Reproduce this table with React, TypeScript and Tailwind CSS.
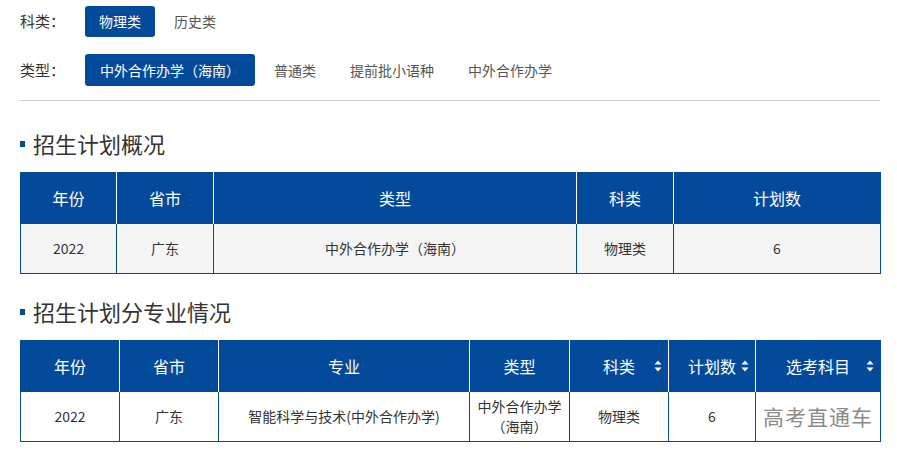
import React from "react";

const BLUE = "bg-[#034b9a]";

function SortIcon() {
  return (
    <svg width="8" height="12" viewBox="0 0 8 12" className="absolute right-[6px] top-1/2 -translate-y-1/2">
      <path d="M4 0.5 L7.5 4.5 L0.5 4.5 Z" fill="#fff" />
      <path d="M4 11.5 L7.5 7.5 L0.5 7.5 Z" fill="#fff" />
    </svg>
  );
}

function Title({ text }: { text: string }) {
  return (
    <div className="flex items-center h-[30px]">
      <span className={`w-[5px] h-[6px] ${BLUE} mr-[8px] mt-[2px]`} />
      <span className="text-[22px] text-[#333] leading-[30px]">{text}</span>
    </div>
  );
}

export default function App() {
  const font = { fontFamily: '"Noto Sans CJK SC", "Noto Sans", sans-serif' };
  return (
    <div className="w-[897px] h-[451px] bg-white overflow-hidden px-[20px] pt-[6px]" style={font}>
      {/* filters */}
      <div className="flex items-center h-[31px]">
        <div className="w-[65px] text-[15px] text-[#333]">科类：</div>
        <div className={`h-[31px] px-[14px] flex items-center rounded-[3px] ${BLUE} text-white text-[14px]`}>物理类</div>
        <div className="ml-[4px] px-[15px] text-[14px] text-[#555]">历史类</div>
      </div>
      <div className="flex items-center h-[32px] mt-[17px]">
        <div className="w-[65px] text-[15px] text-[#333]">类型：</div>
        <div className={`h-[32px] px-[15px] flex items-center rounded-[3px] ${BLUE} text-white text-[14px]`}>中外合作办学（海南）</div>
        <div className="ml-[4px] px-[15px] text-[14px] text-[#555]">普通类</div>
        <div className="ml-[4px] px-[15px] text-[14px] text-[#555]">提前批小语种</div>
        <div className="ml-[4px] px-[15px] text-[14px] text-[#555]">中外合作办学</div>
      </div>
      <div className="mt-[14px] h-px w-[860px] bg-[#cfcfcf]" />

      <div className="mt-[27px]">
        <Title text="招生计划概况" />
      </div>
      <table className="mt-[14px] w-[860px] table-fixed border-collapse border border-[#034b9a]">
        <colgroup>
          <col className="w-[96px]" />
          <col className="w-[97px]" />
          <col className="w-[363px]" />
          <col className="w-[97px]" />
          <col className="w-[207px]" />
        </colgroup>
        <thead>
          <tr className={`${BLUE} h-[51px] text-white text-[16px]`}>
            <th className="font-normal border-r border-white">年份</th>
            <th className="font-normal border-r border-white">省市</th>
            <th className="font-normal border-r border-white">类型</th>
            <th className="font-normal border-r border-white">科类</th>
            <th className="font-normal">计划数</th>
          </tr>
        </thead>
        <tbody>
          <tr className="bg-[#f5f5f5] h-[50px] text-[14px] text-[#333] text-center">
            <td className="border-r border-[#034b9a]">2022</td>
            <td className="border-r border-[#034b9a]">广东</td>
            <td className="border-r border-[#034b9a]">中外合作办学（海南）</td>
            <td className="border-r border-[#034b9a]">物理类</td>
            <td>6</td>
          </tr>
        </tbody>
      </table>

      <div className="mt-[22px]">
        <Title text="招生计划分专业情况" />
      </div>
      <table className="mt-[14px] w-[860px] table-fixed border-collapse border border-[#034b9a]">
        <colgroup>
          <col className="w-[99px]" />
          <col className="w-[99px]" />
          <col className="w-[251px]" />
          <col className="w-[100px]" />
          <col className="w-[99px]" />
          <col className="w-[87px]" />
          <col className="w-[125px]" />
        </colgroup>
        <thead>
          <tr className={`${BLUE} h-[51px] text-white text-[16px]`}>
            <th className="font-normal border-r border-white">年份</th>
            <th className="font-normal border-r border-white">省市</th>
            <th className="font-normal border-r border-white">专业</th>
            <th className="font-normal border-r border-white">类型</th>
            <th className="font-normal border-r border-white relative">科类<SortIcon /></th>
            <th className="font-normal border-r border-white relative">计划数<SortIcon /></th>
            <th className="font-normal relative">选考科目<SortIcon /></th>
          </tr>
        </thead>
        <tbody>
          <tr className="bg-white h-[50px] text-[14px] text-[#333] text-center">
            <td className="border-r border-[#034b9a]">2022</td>
            <td className="border-r border-[#034b9a]">广东</td>
            <td className="border-r border-[#034b9a]">智能科学与技术(中外合作办学)</td>
            <td className="border-r border-[#034b9a] leading-[20px]">中外合作办学<br />（海南）</td>
            <td className="border-r border-[#034b9a]">物理类</td>
            <td className="border-r border-[#034b9a]">6</td>
            <td className="text-[21px] text-[#8a8a8a] tracking-[1px]">高考直通车</td>
          </tr>
        </tbody>
      </table>
    </div>
  );
}
